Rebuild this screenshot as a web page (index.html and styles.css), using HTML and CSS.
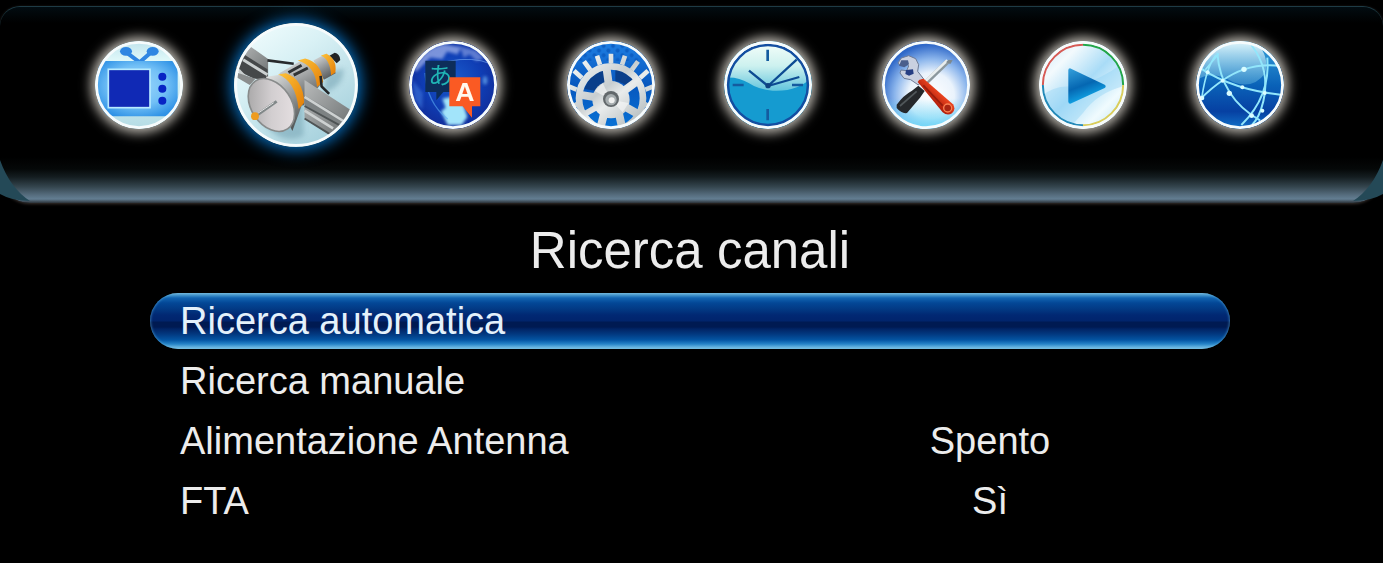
FILE: index.html
```html
<!DOCTYPE html>
<html lang="it">
<head>
<meta charset="utf-8">
<meta name="viewport" content="width=device-width, initial-scale=1">
<title>Ricerca canali</title>
<link rel="stylesheet" href="styles.css">
</head>
<body>
<header class="topbar">
  <nav class="tabs" aria-label="Menu principale">
    <button class="tab" type="button" aria-label="Programmi">
      <svg viewBox="44 34 264 264" aria-hidden="true">
        <defs>
          <linearGradient id="tvBack" x1="0" y1="0" x2="0" y2="1"><stop offset="0" stop-color="#bfe3ec"/><stop offset=".25" stop-color="#e4fbfb"/><stop offset="1" stop-color="#b4dbe4"/></linearGradient>
          <radialGradient id="tvBody" cx=".5" cy=".45" r=".6"><stop offset="0" stop-color="#9ad6fb"/><stop offset=".6" stop-color="#72c0f6"/><stop offset="1" stop-color="#3193e6"/></radialGradient>
        </defs>
        <rect x="44" y="34" width="264" height="264" fill="url(#tvBack)"/>
        <path d="M138 68L178 98L214 66" fill="none" stroke="#2f86e2" stroke-width="12"/>
        <ellipse cx="137" cy="65" rx="18" ry="13" fill="#2f86e2"/><ellipse cx="217" cy="65" rx="18" ry="13" fill="#2f86e2"/>
        <rect x="52" y="94" width="240" height="166" rx="12" fill="url(#tvBody)"/>
        <rect x="84" y="119" width="125" height="115" fill="#1029b5" stroke="#b8ebff" stroke-width="5"/>
        <g fill="#0824c4"><circle cx="246" cy="141" r="12"/><circle cx="246" cy="177" r="12"/><circle cx="246" cy="213" r="12"/></g>
        <circle class="rim" cx="176" cy="166" r="128"/>
      </svg>
    </button>
    <button class="tab tab-active" type="button" aria-label="Ricerca canali" aria-current="page">
      <svg viewBox="38 37 378 378" aria-hidden="true">
        <defs>
          <linearGradient id="satSky" x1="0" y1="0" x2=".7" y2="1"><stop offset="0" stop-color="#f6ffff"/><stop offset=".4" stop-color="#d9f1f5"/><stop offset="1" stop-color="#a5d0dc"/></linearGradient>
          <linearGradient id="satMetal" x1=".2" y1="0" x2=".7" y2="1"><stop offset="0" stop-color="#dcdedd"/><stop offset=".45" stop-color="#9c9fa0"/><stop offset="1" stop-color="#4f5354"/></linearGradient>
          <linearGradient id="satDish" x1="0" y1="0" x2="1" y2="1"><stop offset="0" stop-color="#9b9b9b"/><stop offset=".5" stop-color="#d2ced0"/><stop offset="1" stop-color="#ece5e7"/></linearGradient>
          <linearGradient id="satGold" x1="0" y1="0" x2="1" y2="1"><stop offset="0" stop-color="#ffc43b"/><stop offset="1" stop-color="#e27c06"/></linearGradient>
          <linearGradient id="satPanel" x1="0" y1="0" x2="1" y2="1"><stop offset="0" stop-color="#b9bbbb"/><stop offset="1" stop-color="#696e6f"/></linearGradient>
          <filter id="satSoft"><feGaussianBlur stdDeviation="8"/></filter>
        </defs>
        <rect x="38" y="37" width="378" height="378" fill="url(#satSky)"/>
        <path d="M110 320Q180 420 250 380L250 280ZM320 190L372 176Q374 230 310 250Z" fill="#7fabba" opacity=".65" filter="url(#satSoft)"/>
        <path d="M90 110L142 147V205L116 212L38 180V158Z" fill="url(#satPanel)"/>
        <path d="M70 134L140 178V207L98 206L38 176Z" fill="#454849"/>
        <path d="M66 149L140 195M52 180L90 221" stroke="#cbd0d0" stroke-width="9"/>
        <path d="M42 186L104 207L86 226L43 201Z" fill="#8a8d8d"/>
        <path d="M140 151L220 161" stroke="#272a2c" stroke-width="8"/>
        <path d="M280 151L320 130L348 190L312 210Z" fill="url(#satMetal)"/>
        <path d="M329 137L345 128Q360 130 362 150L351 160Z" fill="#222426"/>
        <path d="M303 136Q331 148 334 196L347 188Q353 148 320 131Z" fill="url(#satGold)"/>
        <path d="M176 190L246 150Q290 150 309 216L248 290Z" fill="url(#satMetal)"/>
        <path d="M232 151Q286 165 291 232L310 217Q305 157 255 145Z" fill="url(#satGold)"/>
        <path d="M204 188L244 166M220 196L263 174" stroke="#303335" stroke-width="9"/>
        <path d="M302 198L305 230L328 253" fill="none" stroke="#242729" stroke-width="8"/>
        <path d="M135 201L185 194Q236 213 247 282L216 366Z" fill="url(#satMetal)"/>
        <path d="M172 194Q225 212 235 299L252 280Q249 207 196 190Z" fill="url(#satGold)"/>
        <path d="M253 211L394 302L370 350L329 378L253 326Z" fill="url(#satPanel)"/>
        <path d="M253 258L382 333L361 350L253 288Z" fill="#7d8283"/>
        <path d="M253 262L370 335M253 304L340 358" stroke="#cdd1d1" stroke-width="8"/>
        <path d="M253 290L362 350M253 328L330 376" stroke="#4f5455" stroke-width="6"/>
        <ellipse cx="152" cy="287" rx="61" ry="88" transform="rotate(-34 152 287)" fill="url(#satDish)" stroke="#888b8b" stroke-width="5"/>
        <path d="M103 321L168 276" stroke="#818889" stroke-width="9"/>
        <path d="M105 316L159 280" stroke="#dedfdf" stroke-width="3"/>
        <circle cx="102" cy="321" r="12" fill="#ee9c20"/>
        <circle class="rim" cx="227" cy="226" r="184"/>
      </svg>
    </button>
    <button class="tab" type="button" aria-label="Lingua">
      <svg viewBox="44 34 264 264" aria-hidden="true">
        <defs>
          <radialGradient id="langSea" cx=".5" cy=".45" r=".55"><stop offset="0" stop-color="#1a5ccc"/><stop offset=".6" stop-color="#0f3db4"/><stop offset="1" stop-color="#112c98"/></radialGradient>
          <filter id="langSoft"><feGaussianBlur stdDeviation="4"/></filter>
        </defs>
        <rect x="44" y="34" width="264" height="264" fill="url(#langSea)"/>
        <g filter="url(#langSoft)">
          <path d="M58 120Q90 50 150 44L200 52L190 74L158 66L144 88L108 84L84 108L66 126Z" fill="#9fb2ea" opacity=".75"/>
          <path d="M196 50L244 62L270 86L246 94L226 74L208 84Z" fill="#8098e0" opacity=".7"/>
          <ellipse cx="272" cy="152" rx="7" ry="13" fill="#6fb0f2" opacity=".7"/>
          <path d="M54 150L86 190L84 240L60 210Z" fill="#3d76dd" opacity=".6"/>
          <path d="M144 207L170 202L208 226L219 262L202 286L160 286L140 245L154 234Z" fill="#a2e4fa"/>
        </g>
        <path d="M160 95Q235 80 288 102" fill="none" stroke="#6ea0ef" stroke-width="3" opacity=".7"/>
        <path d="M92 130Q98 220 160 268" fill="none" stroke="#58a8f2" stroke-width="4" opacity=".6"/>
        <path d="M93 93H184V187H147L126 212V187H93Z" fill="#0d2d5a"/>
        <text class="kana" x="138" y="162">あ</text>
        <path d="M165 143H258V230H233V264L205 230H165Z" fill="#fa5a23"/>
        <text class="letter" x="212" y="215">A</text>
        <circle class="rim" cx="176" cy="166" r="128"/>
      </svg>
    </button>
    <button class="tab" type="button" aria-label="Sistema">
      <svg viewBox="51 34 264 264" aria-hidden="true">
        <defs>
          <linearGradient id="gearBlue" x1="0" y1="0" x2="0" y2="1"><stop offset="0" stop-color="#1f80e4"/><stop offset=".5" stop-color="#0757be"/><stop offset="1" stop-color="#0873d6"/></linearGradient>
          <linearGradient id="gearSteel" gradientUnits="userSpaceOnUse" x1="90" y1="80" x2="260" y2="290"><stop offset="0" stop-color="#f4f7f7"/><stop offset=".45" stop-color="#c8ced0"/><stop offset=".6" stop-color="#e9ecec"/><stop offset="1" stop-color="#b2babc"/></linearGradient>
          <pattern id="gearDots" width="28" height="28" patternUnits="userSpaceOnUse"><circle cx="7" cy="7" r="6" fill="#0d5fc4"/><circle cx="21" cy="21" r="6" fill="#0d5fc4"/></pattern>
        </defs>
        <rect x="51" y="34" width="264" height="264" fill="url(#gearBlue)"/>
        <rect x="51" y="34" width="264" height="60" fill="url(#gearDots)"/>
        <path d="M103 178Q120 128 176 118L182 160Q150 170 140 184ZM196 118Q236 122 262 158L236 174Q220 158 196 154Z" fill="#0a3f8a"/>
        <g fill="none" stroke="url(#gearSteel)">
          <circle cx="183" cy="206" r="96" stroke-width="20"/>
          <path d="M183 100V72M216 105L225 78M150 105L141 78M245 121L264 95M121 121L102 95M270 145L294 123M96 145L72 123M286 180L310 170M80 180L56 170M84 222L58 236M282 222L308 236M96 248L74 266M270 248L292 266" stroke-width="14"/>
          <path d="M180 190L168 104M205 196L262 154M158 206L82 194M168 230L152 292M202 230L216 292M220 228L280 262" stroke-width="24"/>
          <path d="M148 228L88 262" stroke-width="18"/>
        </g>
        <circle cx="183" cy="210" r="56" fill="url(#gearSteel)"/>
        <path d="M183 210L134 184L158 160ZM183 210L236 220L218 248Z" fill="#fff" opacity=".5"/>
        <circle cx="183" cy="208" r="24" fill="#62686b"/>
        <circle cx="183" cy="210" r="17" fill="#a5acae"/>
        <circle cx="185" cy="212" r="9" fill="#eff0ef"/>
        <circle class="rim" cx="183" cy="166" r="128"/>
      </svg>
    </button>
    <button class="tab" type="button" aria-label="Orario">
      <svg viewBox="44 34 264 264" aria-hidden="true">
        <defs>
          <linearGradient id="clockGloss" x1="0" y1="0" x2="0" y2="1"><stop offset="0" stop-color="#f7fffa"/><stop offset=".5" stop-color="#cdf1ef"/><stop offset="1" stop-color="#62c5dd"/></linearGradient>
        </defs>
        <rect x="44" y="34" width="264" height="264" fill="#159bd0"/>
        <path d="M44 34H308V142Q266 187 190 183Q148 180 118 160Q86 140 44 144Z" fill="url(#clockGloss)"/>
        <circle cx="176" cy="166" r="120" fill="none" stroke="#134ea1" stroke-width="8"/>
        <path d="M175 60V94M175 238V272M70 166H103M248 166H281" stroke="#145b9f" stroke-width="8"/>
        <path d="M176 169L119 123M176 169L262 90M176 169L270 142" fill="none" stroke="#0d4b92" stroke-width="7"/>
        <circle cx="176" cy="168" r="8" fill="#0d4280"/>
        <circle class="rim" cx="176" cy="166" r="128"/>
      </svg>
    </button>
    <button class="tab" type="button" aria-label="Strumenti">
      <svg viewBox="44 34 264 264" aria-hidden="true">
        <defs>
          <radialGradient id="toolBack" cx=".56" cy=".62" r=".58"><stop offset="0" stop-color="#ffffff"/><stop offset=".45" stop-color="#eaf3fc"/><stop offset=".72" stop-color="#8bb5ec"/><stop offset="1" stop-color="#2f68c8"/></radialGradient>
          <linearGradient id="toolLow" x1="0" y1="0" x2="0" y2="1"><stop offset=".65" stop-color="#6fd7f7" stop-opacity="0"/><stop offset="1" stop-color="#6fd7f7"/></linearGradient>
          <linearGradient id="toolRed" x1="0" y1="1" x2="1" y2="0"><stop offset=".35" stop-color="#a91808"/><stop offset=".6" stop-color="#e8431f"/></linearGradient>
        </defs>
        <rect x="44" y="34" width="264" height="264" fill="url(#toolBack)"/>
        <rect x="44" y="34" width="264" height="264" fill="url(#toolLow)"/>
        <path d="M164 170L240 96" stroke="#8c989e" stroke-width="15"/>
        <path d="M162 166L240 92" stroke="#e9eeef" stroke-width="8"/>
        <path d="M236 98L244 90L256 92L249 103Z" fill="#7e898e"/>
        <path d="M88 225Q108 197 134 183L153 168L172 184L158 204L119 250Q103 253 88 235Z" fill="#25282b"/>
        <path d="M98 229L148 185" stroke="#50575a" stroke-width="5"/>
        <path d="M92 100L102 85L124 78L145 87L154 105L151 125L169 148L153 166L130 150L110 146L98 130L101 121L118 123L124 109L114 96L96 105Z" fill="#c9d0e0" stroke="#6e7b95" stroke-width="3"/>
        <path d="M102 92L122 92L125 104L111 113L95 108Z" fill="#4a5e8c"/>
        <path d="M116 121L137 119L139 132L125 138L114 133Z" fill="#263e83"/>
        <path d="M151 157Q157 147 169 147L257 224Q267 239 254 251Q240 260 226 248Z" fill="url(#toolRed)"/>
        <path d="M168 167L226 228" stroke="#791207" stroke-width="5" opacity=".6"/>
        <circle cx="241" cy="235" r="12" fill="#a82513" stroke="#f98052" stroke-width="4"/>
        <circle class="rim" cx="176" cy="166" r="128"/>
      </svg>
    </button>
    <button class="tab" type="button" aria-label="Multimedia">
      <svg viewBox="44 34 264 264" aria-hidden="true">
        <defs>
          <linearGradient id="playBack" x1="0" y1="0" x2="1" y2="1"><stop offset="0" stop-color="#c5e4f4"/><stop offset=".25" stop-color="#f3fafd"/><stop offset=".5" stop-color="#a9dcf7"/><stop offset=".75" stop-color="#f0fbfe"/><stop offset="1" stop-color="#b4dff3"/></linearGradient>
          <linearGradient id="playBlue" x1="0" y1="0" x2=".4" y2="1"><stop offset="0" stop-color="#35a1dc"/><stop offset=".55" stop-color="#0567b2"/><stop offset="1" stop-color="#13b0f0"/></linearGradient>
        </defs>
        <rect x="44" y="34" width="264" height="264" fill="url(#playBack)"/>
        <path d="M52 200Q90 165 150 172Q230 150 296 100V170Q220 190 176 250L140 290L60 250Z" fill="#8ed1f6" opacity=".4"/>
        <path d="M137 116L241 165Q247 170 241 175L138 222Q132 222 132 216V121Q132 116 137 116Z" fill="url(#playBlue)"/>
        <g fill="none" stroke-width="7">
          <path d="M55 166A121 121 0 0 1 176 45" stroke="#d65b56"/>
          <path d="M176 45A121 121 0 0 1 297 166" stroke="#23a64a"/>
          <path d="M297 166A121 121 0 0 1 176 287" stroke="#d9cd5c"/>
          <path d="M176 287A121 121 0 0 1 55 166" stroke="#2389b8"/>
        </g>
        <circle class="rim" cx="176" cy="166" r="128"/>
      </svg>
    </button>
    <button class="tab" type="button" aria-label="Rete">
      <svg viewBox="48 34 264 264" aria-hidden="true">
        <defs>
          <linearGradient id="netBack" x1="0" y1="0" x2="0" y2="1"><stop offset="0" stop-color="#37a3dc"/><stop offset=".5" stop-color="#0a62b8"/><stop offset=".8" stop-color="#0640a2"/><stop offset="1" stop-color="#1273c9"/></linearGradient>
          <linearGradient id="netGloss" x1="0" y1="0" x2="0" y2="1"><stop offset="0" stop-color="#e3f6fb"/><stop offset="1" stop-color="#5fb3dd" stop-opacity=".45"/></linearGradient>
        </defs>
        <rect x="48" y="34" width="264" height="264" fill="url(#netBack)"/>
        <path d="M52 150Q100 120 160 158Q220 180 256 130Q268 80 232 42L220 34H48Z" fill="url(#netGloss)"/>
        <g fill="none" stroke="#92e6fb" stroke-width="6">
          <path d="M62 116Q160 180 302 195"/>
          <path d="M62 207Q130 140 192 119Q240 102 300 108"/>
          <path d="M112 70Q122 205 240 272"/>
          <path d="M214 46Q272 120 250 215Q238 265 216 286"/>
          <path d="M262 84Q272 200 184 286"/>
          <path d="M108 76Q80 110 66 200M76 120L116 72" stroke-width="5"/>
        </g>
        <g fill="#d8fcff"><circle cx="192" cy="119" r="8"/><circle cx="148" cy="191" r="8"/><circle cx="83" cy="128" r="6"/><circle cx="187" cy="173" r="6"/><circle cx="254" cy="190" r="6"/><circle cx="215" cy="258" r="7"/><circle cx="247" cy="243" r="6"/><circle cx="66" cy="205" r="7"/><circle cx="128" cy="153" r="6"/></g>
        <circle class="rim" cx="180" cy="166" r="128"/>
      </svg>
    </button>
  </nav>
  <svg class="corner corner-left" viewBox="0 0 30 42" aria-hidden="true"><path d="M0 0Q10 28 30 41Q12 41 0 34Z" fill="#244957"/></svg>
  <svg class="corner corner-right" viewBox="0 0 30 42" aria-hidden="true"><path d="M0 0Q10 28 30 41Q12 41 0 34Z" fill="#244957"/></svg>
</header>
<main class="page">
  <h1 class="title">Ricerca canali</h1>
  <ul class="menu">
    <li><button class="row row-selected" type="button"><span>Ricerca automatica</span></button></li>
    <li><button class="row" type="button"><span>Ricerca manuale</span></button></li>
    <li><button class="row" type="button"><span>Alimentazione Antenna</span><span class="value">Spento</span></button></li>
    <li><button class="row" type="button"><span>FTA</span><span class="value">Sì</span></button></li>
  </ul>
</main>
</body>
</html>
```

FILE: styles.css
```css
* {
  box-sizing: border-box;
}

body {
  margin: 0;
  background: #000;
  color: #ececec;
  font-family: "Liberation Sans", Arial, sans-serif;
}

.topbar {
  position: relative;
  margin-top: 6px;
  padding: 16px 64px 56px 60px;
  border-top: 1px solid #1e3b45;
  border-radius: 20px 20px 30px 30px;
  background: linear-gradient(to top, #2c3238 0, #637e92 4px, #566d7e 8px, #35464f 16px, #141d20 26px, #050808 34px, #000 46px, #000 calc(100% - 16px), #020c11 100%);
  box-shadow: 0 1px 3px #39322f;
}

.tabs {
  display: grid;
  grid-template-columns: repeat(8, 1fr);
  place-items: center;
}

.tab {
  width: 88px;
  height: 88px;
  padding: 0;
  border: 0;
  border-radius: 50%;
  background: none;
  overflow: hidden;
  box-shadow: 0 0 12px 4px rgba(235, 230, 220, 0.8);
}

.tab-active {
  width: 124px;
  height: 124px;
  box-shadow: 0 0 16px 3px #0872c4;
}

.tab svg {
  display: block;
  width: 100%;
  height: 100%;
}

.rim {
  fill: none;
  stroke: #f6fbfc;
  stroke-width: 9;
}

.kana {
  fill: #20b5b5;
  font: 72px "Noto Sans CJK JP", sans-serif;
  text-anchor: middle;
}

.letter {
  fill: #fff8ee;
  font: bold 80px "Liberation Sans", Arial, sans-serif;
  text-anchor: middle;
}

.corner {
  position: absolute;
  bottom: 1px;
  width: 30px;
  height: 42px;
}

.corner-left {
  left: 0;
}

.corner-right {
  right: 0;
  transform: scaleX(-1);
}

.page {
  padding: 18px 153px 32px 150px;
}

.title {
  margin: 0 0 12px;
  font-size: 51px;
  font-weight: 400;
  line-height: 60px;
  text-align: center;
}

.menu {
  display: grid;
  gap: 4px;
  margin: 0;
  padding: 0;
  list-style: none;
}

.row {
  display: grid;
  grid-template-columns: 5fr 4fr;
  align-items: center;
  width: 100%;
  height: 56px;
  padding: 0;
  border: 0;
  border-radius: 28px;
  background: none;
  color: inherit;
  font: 38px/56px "Liberation Sans", Arial, sans-serif;
  text-align: left;
}

.row span:first-child {
  padding-left: 30px;
}

.row .value {
  text-align: center;
}

.row-selected {
  background: linear-gradient(#7fb9d6 0, #4596cd 2px, #1163b0 5px, #034796 10px, #023781 17px, #012873 22px, #01246c 28px, #001a52 29px, #001a52 34px, #012465 36px, #02387f 41px, #0455a3 47px, #2583c7 51px, #62b0de 54px, #8bc8e2 56px);
  box-shadow: inset 0 0 3px #5cb0e0;
  color: #e4f1fb;
}
```
